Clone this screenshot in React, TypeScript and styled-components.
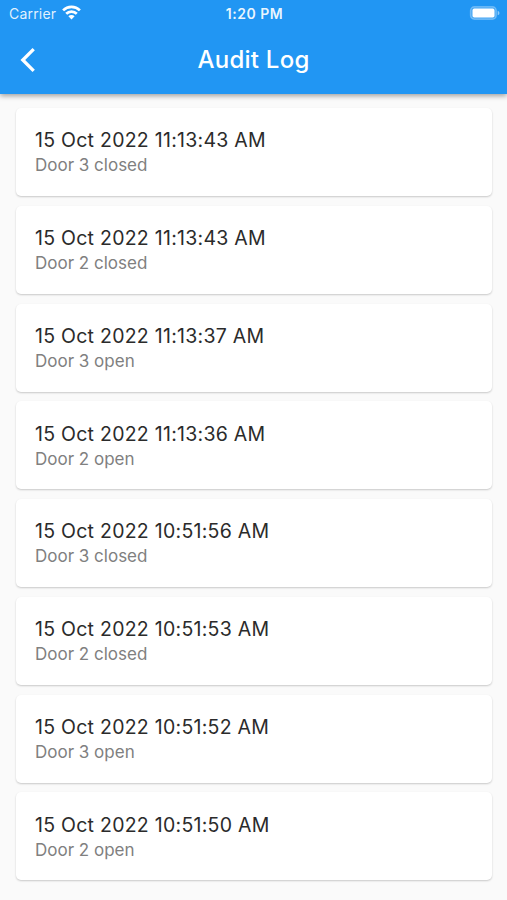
import React from "react";
import styled, { createGlobalStyle } from "styled-components";

const GlobalStyle = createGlobalStyle`
  * { box-sizing: border-box; }
  body { margin: 0; background: #fafafa; font-family: Inter, "Liberation Sans", sans-serif; }
`;

const Screen = styled.div`
  width: 507px;
  height: 900px;
  overflow: hidden;
  background: #fafafa;
`;

const Header = styled.header`
  height: 94px;
  background: #2196f3;
  color: #fff;
  box-shadow: 0 2px 5px rgba(0, 0, 0, 0.36);
`;

const StatusBar = styled.div`
  height: 27px;
  display: grid;
  grid-template-columns: 1fr auto 1fr;
  align-items: center;
  padding: 0 7px 0 9px;
`;

const Carrier = styled.div`
  display: flex;
  align-items: center;
  gap: 6px;
  font-size: 14px;
  line-height: 27px;
  letter-spacing: 0.2px;
  color: rgba(255, 255, 255, 0.88);
`;

const WifiIcon = styled.svg`
  margin-bottom: 2px;
`;

const Clock = styled.div`
  font-size: 14px;
  font-weight: 600;
  line-height: 27px;
  letter-spacing: 0.5px;
  color: rgba(255, 255, 255, 0.92);
`;

const Battery = styled.svg`
  justify-self: end;
  margin-bottom: 1px;
`;

const NavBar = styled.div`
  height: 65px;
  display: grid;
  grid-template-columns: 60px 1fr 60px;
  align-items: center;
`;

const BackButton = styled.button`
  border: 0;
  background: none;
  padding: 0 0 0 20px;
  display: flex;
  align-items: center;
  color: inherit;
`;

const Title = styled.h1`
  margin: 0;
  text-align: center;
  font-size: 24px;
  font-weight: 500;
  line-height: 30px;
  letter-spacing: 0.25px;
`;

const LogList = styled.main`
  display: flex;
  flex-direction: column;
  gap: 9.75px;
  padding: 14.2px 15px 0 15.5px;
`;

const LogCard = styled.article`
  height: 88px;
  flex: none;
  padding: 19.2px 19.5px;
  background: #fff;
  border-radius: 5px;
  box-shadow: 0 1px 2px rgba(0, 0, 0, 0.2);
`;

const Timestamp = styled.div`
  font-size: 19.5px;
  line-height: 26px;
  letter-spacing: 0.26px;
  color: #2b2b2b;
`;

const Message = styled.div`
  font-size: 17px;
  line-height: 25px;
  color: #808080;
`;

const entries = [
  ["15 Oct 2022 11:13:43 AM", "Door 3 closed"],
  ["15 Oct 2022 11:13:43 AM", "Door 2 closed"],
  ["15 Oct 2022 11:13:37 AM", "Door 3 open"],
  ["15 Oct 2022 11:13:36 AM", "Door 2 open"],
  ["15 Oct 2022 10:51:56 AM", "Door 3 closed"],
  ["15 Oct 2022 10:51:53 AM", "Door 2 closed"],
  ["15 Oct 2022 10:51:52 AM", "Door 3 open"],
  ["15 Oct 2022 10:51:50 AM", "Door 2 open"],
];

export default function App() {
  return (
    <Screen>
      <GlobalStyle />
      <Header>
        <StatusBar>
          <Carrier>
            <span>Carrier</span>
            <WifiIcon width="19" height="15" viewBox="0 0 19 15" fill="none" stroke="#fff" strokeWidth="2.7">
              <path d="M1.1 5.4a11.9 11.9 0 0 1 16.8 0M4.2 8.8a7.5 7.5 0 0 1 10.6 0" />
              <path d="M9.5 14.5 6.4 11.3a4.3 4.3 0 0 1 6.2 0z" fill="#fff" stroke="none" />
            </WifiIcon>
          </Carrier>
          <Clock>1:20 PM</Clock>
          <Battery width="31" height="14" viewBox="0 0 31 14">
            <rect x="1.6" y=".8" width="25.6" height="12.4" rx="3.8" fill="#fff" fillOpacity=".15" stroke="#fff" strokeOpacity=".3" strokeWidth="1.5" />
            <rect x="3.5" y="2.6" width="22" height="8.9" rx="1.8" fill="#fff" />
            <path d="M28.7 4.7v4.6q1.8-.7 1.8-2.3t-1.8-2.3" fill="#fff" fillOpacity=".5" />
          </Battery>
        </StatusBar>
        <NavBar>
          <BackButton aria-label="Back">
            <svg width="16" height="26" viewBox="0 0 16 26" fill="none" stroke="#fff" strokeWidth="3.3">
              <path d="M13.7 2.1 2.8 13l10.9 10.9" />
            </svg>
          </BackButton>
          <Title>Audit Log</Title>
        </NavBar>
      </Header>
      <LogList>
        {entries.map(([time, message], i) => (
          <LogCard key={i}>
            <Timestamp>{time}</Timestamp>
            <Message>{message}</Message>
          </LogCard>
        ))}
      </LogList>
    </Screen>
  );
}
